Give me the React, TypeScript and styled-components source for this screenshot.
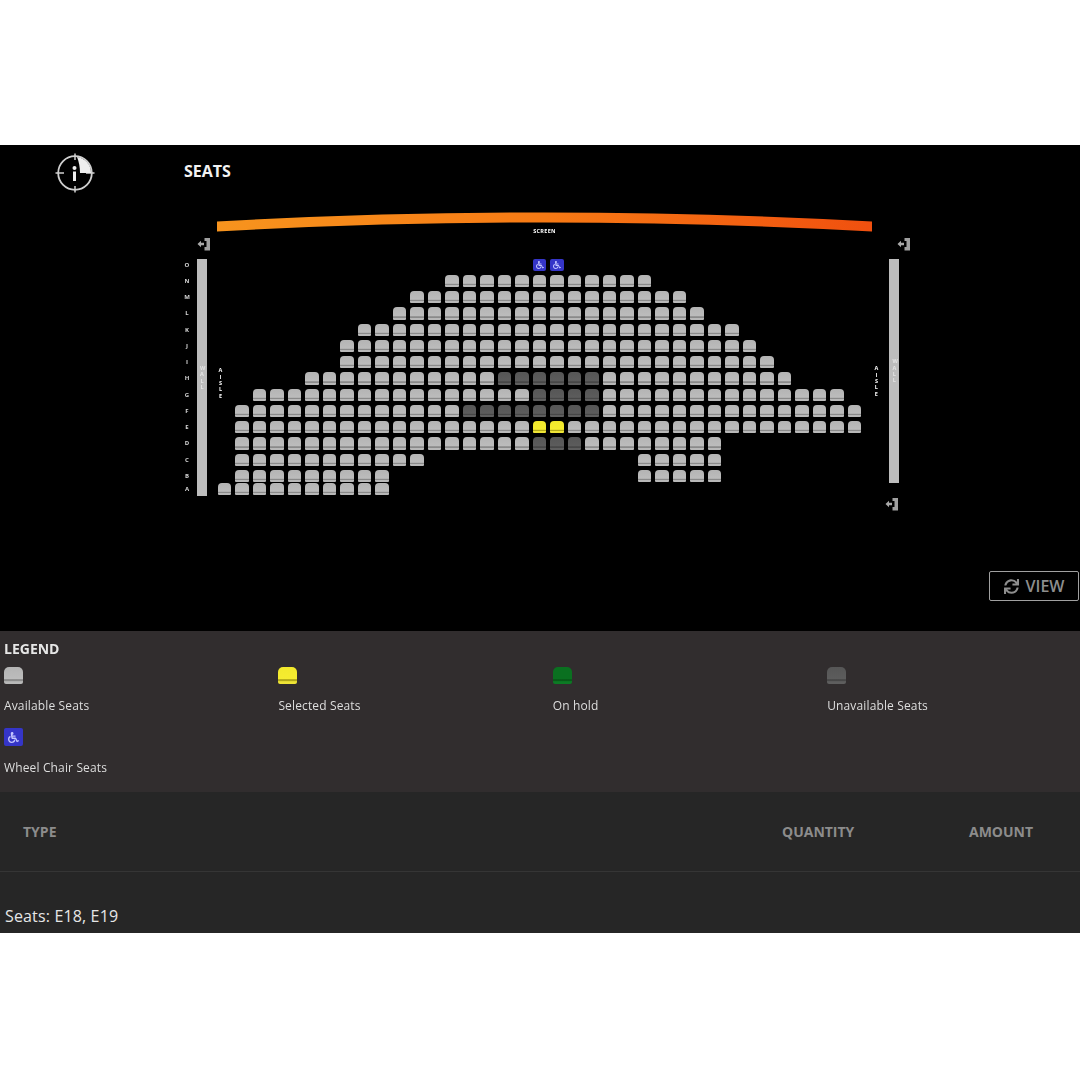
// App.tsx
import React from 'react';
import styled, { createGlobalStyle } from 'styled-components';
import { FaSync, FaWheelchair } from 'react-icons/fa';

const GlobalStyle = createGlobalStyle`
  html, body {
    margin: 0;
    padding: 0;
    background: #ffffff;
    font-family: "Open Sans", "Liberation Sans", sans-serif;
  }
`;

const Page = styled.div`
  width: 1080px;
  min-height: 1080px;
  padding-top: 145px;
  box-sizing: border-box;
  filter: blur(0.55px);
`;

const Stage = styled.section`
  height: 486px;
  background: #000000;
  display: flex;
  flex-direction: column;
  overflow: hidden;
`;

const TopBar = styled.header`
  height: 65px;
  box-sizing: border-box;
  padding: 8px 0 0 55px;
  display: flex;
  align-items: flex-start;
`;

const Logo = styled.svg`
  width: 40px;
  height: 40px;
  margin-right: 89px;
  flex: none;
`;

const Title = styled.h1`
  margin: 0;
  font-size: 16px;
  line-height: 36px;
  font-weight: 700;
  color: #f2f2f2;
`;

const ScreenBlock = styled.div`
  margin-left: 217px;
  width: 655px;
  display: flex;
  flex-direction: column;
  align-items: center;
`;

const ScreenArc = styled.svg`
  width: 655px;
  height: 22px;
  margin-bottom: -5px;
  display: block;
`;

const ScreenLabel = styled.div`
  font-size: 5.5px;
  line-height: 8px;
  font-weight: 700;
  letter-spacing: 0.3px;
  color: #ffffff;
  will-change: opacity;
`;

const ExitRow = styled.div`
  width: 713px;
  margin: 2px 0 0 197px;
  display: flex;
  justify-content: space-between;
`;

const ExitIcon = styled.svg`
  width: 13px;
  height: 14px;
  display: block;
  flex: none;
`;

const MapRow = styled.div`
  position: relative;
  margin: 5.625px 0 0 183px;
  display: flex;
  align-items: flex-start;
`;

const RowLabels = styled.div`
  width: 8px;
  margin-right: 6px;
  flex: none;
  will-change: opacity;
`;

const RowLabel = styled.div<{ $h: number }>`
  height: ${(p) => p.$h}px;
  line-height: ${(p) => p.$h}px;
  font-size: 6px;
  font-weight: 700;
  color: #d8d8d8;
  text-align: center;
`;

const Wall = styled.div<{ $h: number }>`
  width: 10px;
  height: ${(p) => p.$h}px;
  margin-top: 2.7px;
  background: #bdbdbd;
  flex: none;
  display: flex;
  align-items: center;
  justify-content: center;
`;

const StackedText = styled.div`
  width: 4px;
  font-size: 5.5px;
  line-height: 6.4px;
  font-weight: 700;
  text-align: center;
  word-break: break-all;
  color: #ffffff;
  will-change: opacity;
`;

const WallText = styled(StackedText)`
  color: #e4e4e4;
`;

const LeftAisle = styled(StackedText)`
  position: absolute;
  left: 35.5px;
  top: 110.5px;
`;

const RightAisleTrack = styled.div`
  width: 26px;
  padding-top: 108.5px;
  flex: none;
  display: flex;
  justify-content: center;
`;

const SeatArea = styled.div`
  margin-left: 8.9px;
  width: 647.5px;
  flex: none;
`;

const SeatRow = styled.div<{ $h: number }>`
  height: ${(p) => p.$h}px;
  display: flex;
  align-items: center;
`;

const SeatRun = styled.div<{ $skip: number }>`
  margin-left: ${(p) => p.$skip * 17.5}px;
  display: flex;
`;

const SeatCell = styled.div`
  width: 17.5px;
  display: flex;
  justify-content: center;
`;

type Tone = 'available' | 'selected' | 'hold' | 'unavailable' | 'wheel';

const tones: Record<Tone, { top: string; body: string; line: string; lip: string }> = {
  available: { top: '#b4b4b4', body: '#bcbcbc', line: '#8a8a8a', lip: '#b8b8b8' },
  selected: { top: '#f2e92c', body: '#f5ec30', line: '#b0a718', lip: '#eee436' },
  hold: { top: '#0a7020', body: '#0a7020', line: '#075a18', lip: '#0c7a24' },
  unavailable: { top: '#565656', body: '#5c5c5c', line: '#474747', lip: '#5e5e5e' },
  wheel: { top: '#3535c8', body: '#3535c8', line: '#3535c8', lip: '#3535c8' },
};

const Seat = styled.div<{ $tone: Tone; $large?: boolean }>`
  width: ${(p) => (p.$large ? 19 : 13.3)}px;
  height: ${(p) => (p.$large ? (p.$tone === 'wheel' ? 18 : 17) : 12.4)}px;
  flex: none;
  box-sizing: border-box;
  border-radius: ${(p) => (p.$tone === 'wheel' ? '2px' : p.$large ? '5px 5px 2px 2px' : '4px 4px 1px 1px')};
  background: linear-gradient(
    ${(p) => tones[p.$tone].top} 0,
    ${(p) => tones[p.$tone].body} 70%,
    ${(p) => tones[p.$tone].line} 74% 82%,
    ${(p) => tones[p.$tone].lip} 86% 100%
  );
  display: flex;
  align-items: center;
  justify-content: center;
  color: #c4c6ff;
  font-size: ${(p) => (p.$large ? 11 : 8)}px;
`;

const BottomExit = styled.div`
  margin: 1px 0 0 885px;
`;

const ViewButton = styled.button`
  margin: auto 1px 30px auto;
  width: 90px;
  height: 30px;
  padding: 0;
  box-sizing: border-box;
  background: transparent;
  border: 1px solid #a0a0a0;
  border-radius: 2px;
  color: #8e8e8e;
  font-family: inherit;
  font-size: 16px;
  font-weight: 600;
  display: flex;
  align-items: center;
  justify-content: center;
  gap: 7px;
`;

const Legend = styled.section`
  height: 161px;
  box-sizing: border-box;
  padding: 9px 0 0 4px;
  background: #312d2e;
`;

const LegendTitle = styled.h2`
  margin: 0 0 9px;
  font-size: 14px;
  line-height: 18px;
  font-weight: 700;
  color: #e6e6e6;
`;

const LegendGrid = styled.div`
  display: grid;
  grid-template-columns: repeat(4, 274.4px);
  row-gap: 14px;
`;

const LegendItem = styled.div`
  display: flex;
  flex-direction: column;
  align-items: flex-start;
  gap: 14px;
`;

const LegendText = styled.div`
  font-size: 12px;
  line-height: 16px;
  letter-spacing: 0.14px;
  color: #dedede;
`;

const Summary = styled.section`
  height: 141px;
  overflow: hidden;
  background: #262626;
`;

const SummaryHead = styled.div`
  height: 80px;
  box-sizing: border-box;
  padding: 0 46px 1px 23px;
  border-bottom: 1px solid #353535;
  display: grid;
  grid-template-columns: 1fr 187px 65px;
  align-items: center;
`;

const HeadCell = styled.div`
  font-size: 14px;
  font-weight: 700;
  color: #8c8c8c;
`;

const SeatList = styled.div`
  padding: 32px 0 0 5px;
  font-size: 16px;
  line-height: 24px;
  letter-spacing: 0.15px;
  color: #e6e6e6;
`;

const rows: { label: string; h: number; runs: [number, number][] }[] = [
  { label: 'O', h: 16.25, runs: [[18, 19]] },
  { label: 'N', h: 16.25, runs: [[13, 24]] },
  { label: 'M', h: 16.25, runs: [[11, 26]] },
  { label: 'L', h: 16.25, runs: [[10, 27]] },
  { label: 'K', h: 16.25, runs: [[8, 29]] },
  { label: 'J', h: 16.25, runs: [[7, 30]] },
  { label: 'I', h: 16.25, runs: [[7, 31]] },
  { label: 'H', h: 16.25, runs: [[5, 32]] },
  { label: 'G', h: 16.25, runs: [[2, 35]] },
  { label: 'F', h: 16.25, runs: [[1, 36]] },
  { label: 'E', h: 16.25, runs: [[1, 36]] },
  { label: 'D', h: 16.25, runs: [[1, 28]] },
  { label: 'C', h: 16.25, runs: [[1, 11], [24, 28]] },
  { label: 'B', h: 16.25, runs: [[1, 9], [24, 28]] },
  { label: 'A', h: 10, runs: [[0, 9]] },
];

const taken: Record<string, [number, number]> = {
  H: [16, 21],
  G: [18, 21],
  F: [14, 21],
  D: [18, 20],
};

const toneFor = (label: string, col: number): Tone => {
  if (label === 'O') return 'wheel';
  if (label === 'E' && (col === 18 || col === 19)) return 'selected';
  const range = taken[label];
  if (range && col >= range[0] && col <= range[1]) return 'unavailable';
  return 'available';
};

const legendItems: { tone: Tone; text: string }[] = [
  { tone: 'available', text: 'Available Seats' },
  { tone: 'selected', text: 'Selected Seats' },
  { tone: 'hold', text: 'On hold' },
  { tone: 'unavailable', text: 'Unavailable Seats' },
  { tone: 'wheel', text: 'Wheel Chair Seats' },
];

const Exit = () => (
  <ExitIcon viewBox="0 0 13 14">
    <path d="M0.5 7 L4 3.8 V5.8 H7 V8.2 H4 V10.2 Z" fill="#a8a8a8" />
    <path d="M7.5 1 H13 V13.5 H7.5 V10 H9.5 V4 H7.5 Z" fill="#a0a0a0" />
  </ExitIcon>
);

const App: React.FC = () => {
  return (
    <Page>
      <GlobalStyle />
      <Stage>
        <TopBar>
          <Logo viewBox="0 0 40 40">
            <circle cx="20" cy="20" r="16.8" fill="none" stroke="#cfcfcf" strokeWidth="1.8" />
            <path d="M20 0.5 V7 M20 33 V39.5 M0.5 20 H9 M31 20 H39.5" stroke="#cfcfcf" strokeWidth="1.5" />
            <path d="M22 4 A16 16 0 0 1 36 20 H25 C25 14 24 9 22 4 Z" fill="#eeeeee" />
            <circle cx="19.5" cy="15" r="2" fill="#eeeeee" />
            <path d="M19.5 18.5 V28" stroke="#eeeeee" strokeWidth="3" />
          </Logo>
          <Title>SEATS</Title>
        </TopBar>

        <ScreenBlock>
          <ScreenArc viewBox="0 0 655 22">
            <defs>
              <linearGradient id="screenGlow" x1="0" x2="1" y1="0" y2="0">
                <stop offset="0" stopColor="#f7941e" />
                <stop offset="0.5" stopColor="#f77a14" />
                <stop offset="1" stopColor="#f0500f" />
              </linearGradient>
            </defs>
            <path d="M0 11.5 Q327 -6.5 655 11.5 V21.5 Q327 3.5 0 21.5 Z" fill="url(#screenGlow)" />
          </ScreenArc>
          <ScreenLabel>SCREEN</ScreenLabel>
        </ScreenBlock>

        <ExitRow>
          <Exit />
          <Exit />
        </ExitRow>

        <MapRow>
          <RowLabels>
            {rows.map((row) => (
              <RowLabel key={row.label} $h={row.h}>{row.label}</RowLabel>
            ))}
          </RowLabels>
          <Wall $h={236.7}>
            <WallText>WALL</WallText>
          </Wall>
          <LeftAisle>AISLE</LeftAisle>
          <SeatArea>
            {rows.map((row) => (
              <SeatRow key={row.label} $h={row.h}>
                {row.runs.map(([from, to], i) => {
                  const skip = i === 0 ? from : from - row.runs[i - 1][1] - 1;
                  const cols = Array.from({ length: to - from + 1 }, (_, k) => from + k);
                  return (
                    <SeatRun key={from} $skip={skip}>
                      {cols.map((col) => {
                        const tone = toneFor(row.label, col);
                        return (
                          <SeatCell key={col}>
                            <Seat $tone={tone}>{tone === 'wheel' && <FaWheelchair />}</Seat>
                          </SeatCell>
                        );
                      })}
                    </SeatRun>
                  );
                })}
              </SeatRow>
            ))}
          </SeatArea>
          <RightAisleTrack>
            <StackedText>AISLE</StackedText>
          </RightAisleTrack>
          <Wall $h={223.4}>
            <WallText>WALL</WallText>
          </Wall>
        </MapRow>

        <BottomExit>
          <Exit />
        </BottomExit>

        <ViewButton>
          <FaSync size={15} />
          VIEW
        </ViewButton>
      </Stage>

      <Legend>
        <LegendTitle>LEGEND</LegendTitle>
        <LegendGrid>
          {legendItems.map((item) => (
            <LegendItem key={item.text}>
              <Seat $tone={item.tone} $large>{item.tone === 'wheel' && <FaWheelchair />}</Seat>
              <LegendText>{item.text}</LegendText>
            </LegendItem>
          ))}
        </LegendGrid>
      </Legend>

      <Summary>
        <SummaryHead>
          <HeadCell>TYPE</HeadCell>
          <HeadCell>QUANTITY</HeadCell>
          <HeadCell>AMOUNT</HeadCell>
        </SummaryHead>
        <SeatList>Seats: E18, E19</SeatList>
      </Summary>
    </Page>
  );
};

export default App;
